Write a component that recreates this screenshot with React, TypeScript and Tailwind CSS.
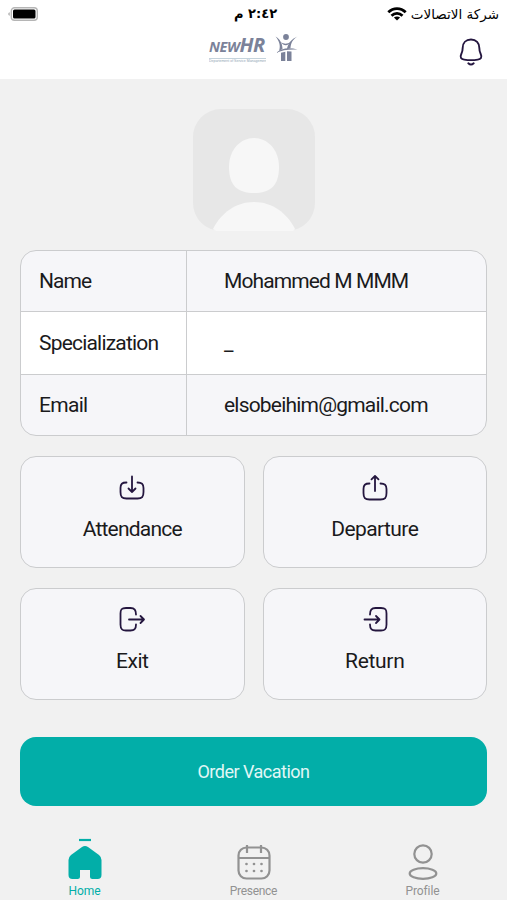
import { ReactNode } from "react";

type Row = {
  label: string;
  value: string;
  labelClass: string;
  valueClass: string;
};

const rows: Row[] = [
  { label: "Name", value: "Mohammed M MMM", labelClass: "tracking-[-0.9px]", valueClass: "tracking-[-0.9px]" },
  { label: "Specialization", value: "_", labelClass: "tracking-[-0.8px]", valueClass: "" },
  { label: "Email", value: "elsobeihim@gmail.com", labelClass: "tracking-[-0.7px]", valueClass: "tracking-[-0.8px]" },
];

function StatusBar() {
  return (
    <div className="flex h-[27px] items-center justify-between pl-2 pr-2 text-black">
      <svg width="31" height="14" viewBox="0 0 31 14">
        <path d="M1.8 5.2v3.6C.6 8.6.2 7.800.2 7S.6 5.400 1.800 5.200z" fill="#b5b5b5" />
        <rect x="3.300" y=".8" width="26" height="12.400" rx="3.200" fill="#fff" stroke="#b5b5b5" strokeWidth="1.400" />
        <rect x="5" y="2.500" width="22.500" height="9" rx="1.500" />
      </svg>
      <div className="absolute left-[234px] top-1 font-['DejaVu_Sans',sans-serif] text-[13px] font-bold leading-[20px] tracking-[-0.7px]" dir="rtl">
        ٢:٤٢ م
      </div>
      <div className="flex items-center gap-[4px]">
        <svg width="20" height="14" viewBox="0 0 20 14" fill="none" stroke="#000" strokeWidth="2.700">
          <path d="M1.300 5.300c5-5 12.400-5 17.400 0" />
          <path d="M4.500 8.700c3.200-3.200 7.800-3.200 11 0" />
          <path d="M10 13.600 6.900 10.600c1.800-1.600 4.400-1.600 6.200 0z" fill="#000" stroke="none" />
        </svg>
        <span className="font-['DejaVu_Sans',sans-serif] text-[13.500px] leading-[18px]" dir="rtl">
          شركة الاتصالات
        </span>
      </div>
    </div>
  );
}

function Logo() {
  return (
    <div className="flex items-start gap-[9px] text-[#7b8299]">
      <div className="w-[57px]">
        <div className="whitespace-nowrap font-['Open_Sans',sans-serif] font-bold italic leading-[22px]">
          <span className="text-[14.500px] tracking-[-0.4px]">NEW</span>
          <span className="text-[20px] tracking-[-0.6px]">HR</span>
        </div>
        <div className="h-[5px] overflow-hidden whitespace-nowrap border-t border-[#c5d3dc] font-['Liberation_Sans',sans-serif] text-[3.500px] leading-[4px] text-[#8fa3b5]">
          Departement of Service Management
        </div>
      </div>
      <svg width="23" height="28" viewBox="0 0 23 28" fill="currentColor">
        <circle cx="11" cy="3" r="2.900" />
        <path d="M.5 2.500c4.500 2.500 7 7 7 12.500L4 17C6 11.500 4 6.500.5 2.500z" />
        <path d="M22.500 2.500c-4.500 2.500-6.700 6.500-7 11.500l-3.500 1.300C12.500 9.500 17 4.500 22.500 2.500z" />
        <path d="M6 8c2.500 2.200 6.500 2.200 9.500 0-2 4-7 4.500-9.500 0z" />
        <path d="M1 19c5-5 13-6 21.500-3.500C14 15 7 16 1 19z" />
        <path d="M6 18.800l4.300-1.100V27H6zM12 17.200l4.500.2V27H12z" />
      </svg>
    </div>
  );
}

function ActionCard({ icon, label, className }: { icon: ReactNode; label: string; className: string }) {
  return (
    <button className="flex h-[112px] flex-col items-center rounded-[16px] border border-[#cbccce] bg-[#f6f6f9] pt-[17px]">
      <svg width="28" height="28" viewBox="0 0 28 28" fill="none" stroke="#24163f" strokeWidth="1.800" strokeLinecap="round" strokeLinejoin="round">
        {icon}
      </svg>
      <span className={`mt-[13px] text-[21px] leading-[28px] ${className}`}>{label}</span>
    </button>
  );
}

function NavItem({ icon, label, className }: { icon: ReactNode; label: string; className: string }) {
  return (
    <button className={`flex flex-1 flex-col items-center text-[12px] leading-[14px] ${className}`}>
      <svg width="38" height="46" viewBox="0 0 38 46" fill="none" stroke="currentColor" strokeWidth="2.200">
        {icon}
      </svg>
      {label}
    </button>
  );
}

export default function App() {
  return (
    <div className="flex h-[900px] w-[507px] flex-col overflow-hidden bg-[#f1f1f1] font-['Roboto',sans-serif] text-[#1a1a1c]">
      <header className="relative h-[79px] bg-white">
        <StatusBar />
        <div className="flex items-start pl-[209px] pr-6">
          <div className="pt-[7px]">
            <Logo />
          </div>
          <svg className="ml-auto mt-[11px]" width="24" height="28" viewBox="0 0 24 28" fill="none" stroke="#24163f" strokeWidth="1.900" strokeLinecap="round">
            <path d="M12 1.500c-5.200 0-8.300 3.500-8.300 8.300 0 3.300-.3 4-1.400 6.200-1.700 3.400 0 5.100 2.900 5.600 4.400.7 9.200.7 13.600 0 2.900-.5 4.600-2.200 2.900-5.600-1.100-2.200-1.400-2.900-1.400-6.200 0-4.800-3.100-8.300-8.300-8.300z" />
            <path d="M9.300 25.300c1.600 1.500 3.800 1.500 5.400 0" />
          </svg>
        </div>
      </header>

      <main className="flex flex-col px-5 pt-[30px]">
        <svg className="self-center" width="122" height="122" viewBox="0 0 122 122">
          <rect width="122" height="122" rx="28" fill="#e7e7e7" />
          <path d="M61 29c-13 0-25 11-25 29 0 19 9 26 25 26s25-7 25-26c0-18-12-29-25-29z" fill="#f7f7f7" />
          <path d="M20 120c8-16 23-27 41-27s33 11 41 27l-2 2H23z" fill="#f7f7f7" />
        </svg>

        <div className="mt-[19px] h-[186px] overflow-hidden rounded-[16px] border border-[#cbccce] bg-[#f6f6f9] text-[21px]">
          {rows.map((row, i) => (
            <div key={row.label} className={`flex ${i === 1 ? "h-[64px] border-y border-[#cbccce] bg-white" : "h-[60px]"}`}>
              <div className={`flex w-[166px] items-center border-r border-[#cbccce] pl-[18px] pt-[2px] ${row.labelClass}`}>{row.label}</div>
              <div className={`flex items-center pl-[37px] pt-[2px] ${row.valueClass}`}>{row.value}</div>
            </div>
          ))}
        </div>

        <div className="mt-5 grid grid-cols-2 gap-x-[18px] gap-y-5">
          <ActionCard
            label="Attendance"
            className="tracking-[-0.8px]"
            icon={<><path d="M8.500 8.500C4 8.500 2.500 10 2.500 14v4c0 5 1.500 6.500 6 6.500h11c4.500 0 6-1.500 6-6.500v-4c0-4-1.500-5.500-6-5.500" /><path d="M14 2.500V18M10.500 14.500 14 18l3.500-3.500" /></>}
          />
          <ActionCard
            label="Departure"
            className="tracking-[-0.6px]"
            icon={<><path d="M8.500 9.500C4 9.500 2.500 11 2.500 15v4c0 5 1.500 6.500 6 6.500h11c4.500 0 6-1.500 6-6.500v-4c0-4-1.500-5.500-6-5.500" /><path d="M14 17V2M10.500 5.300 14 2l3.500 3.300" /></>}
          />
          <ActionCard
            label="Exit"
            className="tracking-[-0.5px]"
            icon={<><path d="M18 8.500C18 4 16.500 2 12.500 2H8C3.500 2 2.500 3.500 2.500 7.500v11c0 4 1 6 5.500 6h4.500c4 0 5.500-1.500 5.500-6" /><path d="M11 13.500h15M22.500 10 26 13.500 22.500 17" /></>}
          />
          <ActionCard
            label="Return"
            className="tracking-[-0.3px]"
            icon={<><path d="M9 8.500C9 4 10.500 2 14.500 2H20c4.500 0 5.500 1.500 5.500 5.500v11c0 4-1 6-5.500 6h-5.500c-4 0-5.500-1.500-5.500-6" /><path d="M3.500 13.500h15M15 10l3.500 3.500L15 17" /></>}
          />
        </div>

        <button className="mt-[37px] h-[69px] rounded-[16px] bg-[#02aea8] text-[18px] tracking-[-0.5px] text-[#e0f7f6]">
          Order Vacation
        </button>
      </main>

      <nav className="mt-[32px] flex">
        <NavItem
          label="Home"
          className="text-[#02aea8] tracking-[-0.1px]"
          icon={<><path d="M13 2h12" /><path d="M16 9q3-2 6 0l11 8q2.500 2 2.500 5v15q0 4-4 4h-5q-2.500 0-2.500-2.500V32h-10v6.500q0 2.500-2.500 2.500h-5q-4 0-4-4V22q0-3 2.500-5z" fill="currentColor" stroke="none" /></>}
        />
        <NavItem
          label="Presence"
          className="text-[#929292] tracking-[-0.3px]"
          icon={<><rect x="3.500" y="9.500" width="31" height="31" rx="8" /><path d="M3.500 20h31M12 7v8M26 7v8" /><path d="M11.500 26h0M19 26h0M26.500 26h0M11.500 33h0M19 33h0M26.500 33h0" strokeLinecap="round" strokeWidth="2.700" /></>}
        />
        <NavItem
          label="Profile"
          className="text-[#929292] tracking-[-0.1px]"
          icon={<><circle cx="19" cy="16" r="8.700" /><ellipse cx="19" cy="35.500" rx="13.300" ry="5.300" /></>}
        />
      </nav>
    </div>
  );
}
